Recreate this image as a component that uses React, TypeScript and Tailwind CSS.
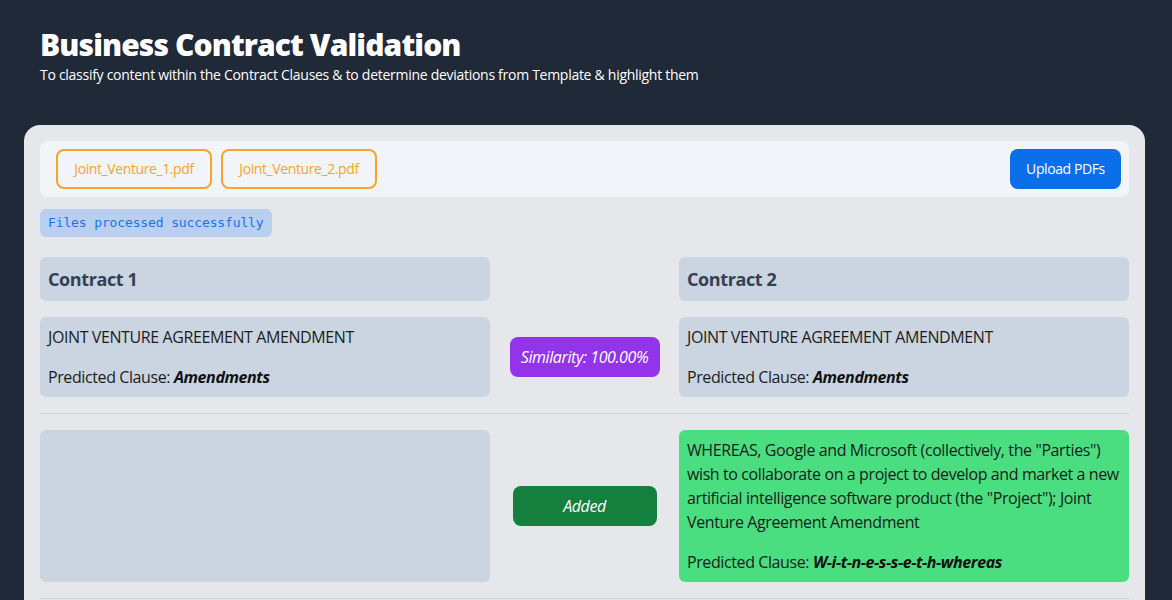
import React from "react";

const font = { fontFamily: '"Open Sans", "Noto Sans", sans-serif' };

function Chip({ name }: { name: string }) {
  return (
    <div className="flex h-10 w-[156px] items-center justify-center rounded-lg border-2 border-[#f5a52a] text-sm text-[#f5a52a]">
      {name}
    </div>
  );
}

function Clause({
  text,
  clause,
  green,
}: {
  text: string;
  clause: string;
  green?: boolean;
}) {
  return (
    <div
      className={`w-[450px] rounded-md p-2 text-base leading-6 text-[#1c1c1c] ${
        green ? "bg-[#4ade80]" : "bg-[#cbd5e1]"
      }`}
    >
      <p>{text}</p>
      <p className="mt-4">
        Predicted Clause: <b className="italic font-bold text-[#111]">{clause}</b>
      </p>
    </div>
  );
}

export default function App() {
  return (
    <div className="min-h-[600px] bg-[#1f2937] pb-6 tracking-[-0.025em]" style={font}>
      <div className="px-10 pt-[27px]">
        <h1 className="text-3xl font-extrabold leading-9 tracking-[-0.03em] text-white">Business Contract Validation</h1>
        <p className="mt-[2px] text-sm leading-5 tracking-[-0.02em] text-white">
          To classify content within the Contract Clauses &amp; to determine deviations from Template &amp; highlight them
        </p>
      </div>
      <div className="ml-6 mt-10 w-[1121px] rounded-2xl bg-[#e5e7eb] p-4">
        <div className="flex h-14 items-center justify-between rounded-lg bg-[#f1f5f9] p-2">
          <div className="flex gap-[9px] pl-2">
            <Chip name="Joint_Venture_1.pdf" />
            <Chip name="Joint_Venture_2.pdf" />
          </div>
          <button className="h-10 w-[111px] rounded-lg bg-[#0a6fe8] text-sm text-white">Upload PDFs</button>
        </div>
        <div
          className="mt-3 inline-flex h-7 items-center rounded-md bg-[#b8cff0] px-2 text-[13px] tracking-[-0.01em] text-[#1a73e8]"
          style={{ fontFamily: '"DejaVu Sans Mono", monospace' }}
        >
          Files processed successfully
        </div>
        <div className="mt-5 flex justify-between">
          <div className="flex h-11 w-[450px] items-center rounded-md bg-[#cbd5e1] px-2 text-lg font-bold text-[#334155]">Contract 1</div>
          <div className="flex h-11 w-[450px] items-center rounded-md bg-[#cbd5e1] px-2 text-lg font-bold text-[#334155]">Contract 2</div>
        </div>
        <div className="mt-4 flex items-stretch">
          <Clause text="JOINT VENTURE AGREEMENT AMENDMENT" clause="Amendments" />
          <div className="flex flex-1 items-center justify-center">
            <div className="flex h-10 w-[150px] items-center justify-center rounded-lg bg-[#9333ea] text-base italic text-white">Similarity: 100.00%</div>
          </div>
          <Clause text="JOINT VENTURE AGREEMENT AMENDMENT" clause="Amendments" />
        </div>
        <div className="my-4 h-px bg-[#cfd0d4]" />
        <div className="flex items-stretch">
          <div className="w-[450px] rounded-md bg-[#cbd5e1]" />
          <div className="flex flex-1 items-center justify-center">
            <div className="flex h-10 w-36 items-center justify-center rounded-lg bg-[#15803d] text-base italic text-white">Added</div>
          </div>
          <Clause
            green
            text={'WHEREAS, Google and Microsoft (collectively, the "Parties") wish to collaborate on a project to develop and market a new artificial intelligence software product (the "Project"); Joint Venture Agreement Amendment'}
            clause="W-i-t-n-e-s-s-e-t-h-whereas"
          />
        </div>
        <div className="mt-4 h-px bg-[#cfd0d4]" />
      </div>
    </div>
  );
}
